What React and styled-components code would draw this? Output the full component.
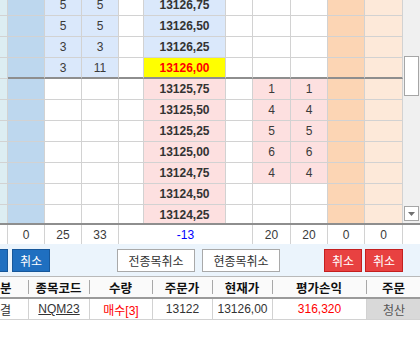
import React from 'react';
import styled, { createGlobalStyle } from 'styled-components';

const GlobalStyle = createGlobalStyle`
  html, body {
    margin: 0;
    padding: 0;
    background: #fff;
  }
  body {
    font-family: "Liberation Sans", "Noto Sans CJK KR", sans-serif;
    color: #333;
  }
`;

const LADDER_COLS = '8px 37px 37px 37px 25px 82px 27px 38px 37px 37px 38px';
const TOTAL_COLS = '8px 37px 37px 37px 134px 38px 37px 37px 38px 17px';
const ORDER_COLS = '56px 61px 63px 60px 60px 94px 55px';

const COLORS = {
  line: '#d2d2d2',
  divider: '#8e8e8e',
  teal: '#dcedf2',
  blue: '#bdd7ee',
  askLight: '#dae8fb',
  bidLight: '#fde0e0',
  current: '#ffff00',
  orange: '#fcd5b4',
  peach: '#fde9d9',
};

const rows = [
  { price: '13126,75', ask: [5, 5] },
  { price: '13126,50', ask: [5, 5] },
  { price: '13126,25', ask: [3, 3] },
  { price: '13126,00', ask: [3, 11], current: true },
  { price: '13125,75', bid: [1, 1] },
  { price: '13125,50', bid: [4, 4] },
  { price: '13125,25', bid: [5, 5] },
  { price: '13125,00', bid: [6, 6] },
  { price: '13124,75', bid: [4, 4] },
  { price: '13124,50' },
  { price: '13124,25' },
];

const LadderRow = ({ row }) => {
  const { price, ask, bid, current } = row;
  const priceBg = current ? COLORS.current : ask ? COLORS.askLight : COLORS.bidLight;
  return (
    <Styled.Row>
      <Styled.Cell $bg={COLORS.teal} />
      <Styled.Cell $bg={COLORS.blue} $divider={current} />
      <Styled.Cell $bg={ask ? COLORS.askLight : '#fff'} $divider={current}>{ask && ask[0]}</Styled.Cell>
      <Styled.Cell $bg={ask ? COLORS.askLight : '#fff'} $divider={current}>{ask && ask[1]}</Styled.Cell>
      <Styled.Cell $divider={current} />
      <Styled.PriceCell $bg={priceBg} $divider={current} $current={current}>{price}</Styled.PriceCell>
      <Styled.Cell $divider={current} />
      <Styled.Cell $bg={bid ? COLORS.bidLight : '#fff'} $divider={current}>{bid && bid[0]}</Styled.Cell>
      <Styled.Cell $bg={bid ? COLORS.bidLight : '#fff'} $divider={current}>{bid && bid[1]}</Styled.Cell>
      <Styled.Cell $bg={COLORS.orange} $divider={current} />
      <Styled.Cell $bg={COLORS.peach} $divider={current} />
    </Styled.Row>
  );
};

const App = () => {
  return (
    <>
      <GlobalStyle />
      <Styled.Page>
        <Styled.Viewport>
          <Styled.Ladder>
            <Styled.Rows>
              {rows.map((row) => (
                <LadderRow key={row.price} row={row} />
              ))}
            </Styled.Rows>
          </Styled.Ladder>
          <Styled.ScrollBar>
            <Styled.Thumb />
            <Styled.Arrow>
              <svg width="7" height="4" viewBox="0 0 7 4">
                <path d="M0 0 H7 L3.5 4 Z" fill="#707070" />
              </svg>
            </Styled.Arrow>
          </Styled.ScrollBar>
        </Styled.Viewport>

        <Styled.TotalRow>
          <Styled.TotalCell />
          <Styled.TotalCell>0</Styled.TotalCell>
          <Styled.TotalCell>25</Styled.TotalCell>
          <Styled.TotalCell>33</Styled.TotalCell>
          <Styled.TotalCell $color="#0000ff">-13</Styled.TotalCell>
          <Styled.TotalCell>20</Styled.TotalCell>
          <Styled.TotalCell>20</Styled.TotalCell>
          <Styled.TotalCell>0</Styled.TotalCell>
          <Styled.TotalCell>0</Styled.TotalCell>
          <Styled.TotalCell $last />
        </Styled.TotalRow>

        <Styled.ButtonBar>
          <Styled.ButtonGroup $gap={4} $offset={-30}>
            <Styled.Button $variant="blue">취소</Styled.Button>
            <Styled.Button $variant="blue">취소</Styled.Button>
          </Styled.ButtonGroup>
          <Styled.ButtonGroup $gap={7} $offset={67}>
            <Styled.Button $variant="plain">전종목취소</Styled.Button>
            <Styled.Button $variant="plain">현종목취소</Styled.Button>
          </Styled.ButtonGroup>
          <Styled.ButtonGroup $gap={3} $offset={44}>
            <Styled.Button $variant="red">취소</Styled.Button>
            <Styled.Button $variant="red">취소</Styled.Button>
          </Styled.ButtonGroup>
        </Styled.ButtonBar>

        <Styled.OrderTable>
          <Styled.OrderGrid>
            <Styled.HeadCell $first>구분</Styled.HeadCell>
            <Styled.HeadCell>종목코드</Styled.HeadCell>
            <Styled.HeadCell>수량</Styled.HeadCell>
            <Styled.HeadCell>주문가</Styled.HeadCell>
            <Styled.HeadCell>현재가</Styled.HeadCell>
            <Styled.HeadCell>평가손익</Styled.HeadCell>
            <Styled.HeadCell>주문</Styled.HeadCell>

            <Styled.DataCell $first>미결</Styled.DataCell>
            <Styled.DataCell>
              <Styled.Code>NQM23</Styled.Code>
            </Styled.DataCell>
            <Styled.DataCell $color="#ff0000">매수[3]</Styled.DataCell>
            <Styled.DataCell>13122</Styled.DataCell>
            <Styled.DataCell>13126,00</Styled.DataCell>
            <Styled.DataCell $color="#ff0000">316,320</Styled.DataCell>
            <Styled.DataCell $bg="#d9d9d9" $color="#555">청산</Styled.DataCell>
          </Styled.OrderGrid>
        </Styled.OrderTable>
      </Styled.Page>
    </>
  );
};

const buttonVariants = {
  blue: 'background: #1f6fc0; border-color: #17579a; color: #fff;',
  red: 'background: #e84141; border-color: #c41f1f; color: #fff;',
  plain: 'background: #fff; border-color: #a9a9a9; color: #333;',
};

const Styled = {
  Page: styled.div`
    width: 420px;
    height: 358px;
    overflow: hidden;
    background: #fff;
  `,
  Viewport: styled.div`
    display: flex;
    height: 223px;
  `,
  Ladder: styled.div`
    width: 403px;
    overflow: hidden;
  `,
  Rows: styled.div`
    margin-top: -5px;
  `,
  Row: styled.div`
    display: grid;
    grid-template-columns: ${LADDER_COLS};
    height: 21px;
  `,
  Cell: styled.div`
    box-sizing: border-box;
    display: flex;
    align-items: center;
    justify-content: center;
    background: ${({ $bg }) => $bg || '#fff'};
    border-right: 1px solid ${COLORS.line};
    border-bottom: ${({ $divider }) => ($divider ? `2px solid ${COLORS.divider}` : `1px solid ${COLORS.line}`)};
    font-size: 12px;
    color: #3a3a3a;
  `,
  PriceCell: styled.div`
    box-sizing: border-box;
    display: flex;
    align-items: center;
    justify-content: center;
    background: ${({ $bg }) => $bg};
    border-right: 1px solid ${COLORS.line};
    border-bottom: ${({ $divider }) => ($divider ? `2px solid ${COLORS.divider}` : `1px solid ${COLORS.line}`)};
    font-size: 12px;
    font-weight: 700;
    color: ${({ $current }) => ($current ? '#ff0000' : '#333')};
  `,
  ScrollBar: styled.div`
    width: 17px;
    display: flex;
    flex-direction: column;
    align-items: center;
    background: #f0f0f0;
  `,
  Thumb: styled.div`
    box-sizing: border-box;
    width: 15px;
    height: 40px;
    margin-top: 56px;
    background: #fff;
    border: 1px solid #a6a6a6;
  `,
  Arrow: styled.div`
    box-sizing: border-box;
    width: 15px;
    height: 15px;
    margin-top: auto;
    margin-bottom: 2px;
    display: flex;
    align-items: center;
    justify-content: center;
    background: #fff;
    border: 1px solid #a6a6a6;
  `,
  TotalRow: styled.div`
    display: grid;
    grid-template-columns: ${TOTAL_COLS};
    height: 21px;
    box-sizing: border-box;
    border-top: 2px solid ${COLORS.divider};
    background: #fff;
  `,
  TotalCell: styled.div`
    box-sizing: border-box;
    display: flex;
    align-items: center;
    justify-content: center;
    border-right: ${({ $last }) => ($last ? 'none' : `1px solid ${COLORS.line}`)};
    font-size: 12px;
    color: ${({ $color }) => $color || '#3a3a3a'};
  `,
  ButtonBar: styled.div`
    display: flex;
    align-items: flex-start;
    height: 32px;
    box-sizing: border-box;
    padding-top: 5px;
    background: #ebf4fc;
    overflow: hidden;
  `,
  ButtonGroup: styled.div`
    display: flex;
    flex-shrink: 0;
    gap: ${({ $gap }) => $gap}px;
    margin-left: ${({ $offset }) => $offset}px;
  `,
  Button: styled.button`
    box-sizing: border-box;
    flex-shrink: 0;
    width: ${({ $variant }) => ($variant === 'plain' ? 78 : 38)}px;
    height: 23px;
    padding: 0;
    border: 1px solid;
    font-family: "Noto Sans CJK KR", sans-serif;
    font-size: 12px;
    line-height: 1;
    ${({ $variant }) => buttonVariants[$variant]}
  `,
  OrderTable: styled.div`
    width: 420px;
    overflow: hidden;
  `,
  OrderGrid: styled.div`
    display: grid;
    grid-template-columns: ${ORDER_COLS};
    grid-template-rows: 23px 21px;
    margin-left: -28px;
  `,
  HeadCell: styled.div`
    position: relative;
    box-sizing: border-box;
    display: flex;
    align-items: center;
    justify-content: center;
    background: #fafafa;
    border-top: 1px solid #b9b9b9;
    border-bottom: 2px solid #9a9a9a;
    font-family: "Noto Sans CJK KR", sans-serif;
    font-size: 12.5px;
    font-weight: 700;
    color: #111;

    &::before {
      content: '';
      display: ${({ $first }) => ($first ? 'none' : 'block')};
      position: absolute;
      left: 0;
      top: 3px;
      bottom: 3px;
      width: 1px;
      background: #a8a8a8;
    }
  `,
  DataCell: styled.div`
    box-sizing: border-box;
    display: flex;
    align-items: center;
    justify-content: center;
    background: ${({ $bg }) => $bg || '#fff'};
    border-left: ${({ $first }) => ($first ? 'none' : `1px solid ${COLORS.line}`)};
    border-bottom: 1px solid ${COLORS.line};
    font-family: "Liberation Sans", "Noto Sans CJK KR", sans-serif;
    font-size: 12px;
    color: ${({ $color }) => $color || '#333'};
  `,
  Code: styled.span`
    text-decoration: underline;
  `,
};

export default App;
